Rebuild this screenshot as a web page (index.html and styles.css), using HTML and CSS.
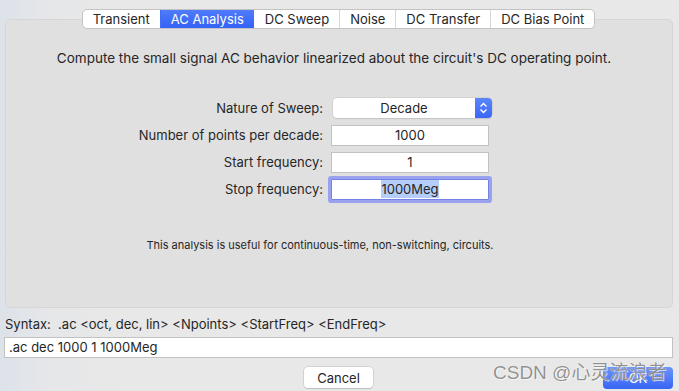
FILE: index.html
```html
<!DOCTYPE html>
<html lang="en">
<head>
    <meta charset="UTF-8">
    <meta name="viewport" content="width=device-width, initial-scale=1.0">
    <title>Edit Simulation Command</title>

    <link rel="stylesheet" href="styles.css">
</head>
<body>
    <div class="window">
        <div class="tabs">
            <div class="tab">Transient</div>
            <div class="tab active">AC Analysis</div>
            <div class="tab">DC Sweep</div>
            <div class="tab">Noise</div>
            <div class="tab">DC Transfer</div>
            <div class="tab">DC Bias Point</div>
        </div>

        <div class="panel">
            <div class="desc">Compute the small signal AC behavior linearized about the circuit's DC operating point.</div>

            <div class="form">
                <label class="label">Nature of Sweep:</label>
                <div class="popup">
                    <span class="popup-value">Decade</span>
                    <span class="stepper">
                        <svg width="9" height="12" viewBox="0 0 9 12">
                            <path d="M1.5 4.5 L4.5 1.5 L7.5 4.5 M1.5 7.5 L4.5 10.5 L7.5 7.5" fill="none" stroke="#fff" stroke-width="1.4"/>
                        </svg>
                    </span>
                </div>

                <label class="label">Number of points per decade:</label>
                <div class="field">1000</div>

                <label class="label">Start frequency:</label>
                <div class="field">1</div>

                <label class="label">Stop frequency:</label>
                <div class="field focused"><span class="sel">1000Meg</span></div>
            </div>

            <div class="note">This analysis is useful for continuous-time, non-switching, circuits.</div>
        </div>

        <div class="syntax">Syntax:&nbsp; .ac &lt;oct, dec, lin&gt; &lt;Npoints&gt; &lt;StartFreq&gt; &lt;EndFreq&gt;</div>
        <div class="command">.ac dec 1000 1 1000Meg</div>

        <div class="buttons">
            <button class="btn cancel" type="button">Cancel</button>
            <button class="btn ok" type="button">OK</button>
        </div>

        <div class="watermark">CSDN @心灵流浪者</div>
    </div>
</body>
</html>
```

FILE: styles.css
```css
body {
    margin: 0;
    padding: 0;
    font-family: Inter, "Liberation Sans", "Noto Sans CJK SC", sans-serif;
    color: #262626;
}

.window {
    position: relative;
    width: 679px;
    height: 391px;
    box-sizing: border-box;
    padding: 9px 6px 0 4px;
    background: linear-gradient(90deg, #dde2e9 0, #e6e7e9 50px, #e8e8e8 120px, #e8e8e8 100%);
    overflow: hidden;
}

.tabs {
    position: relative;
    z-index: 1;
    display: flex;
    width: max-content;
    margin: 0 auto -10px;
    background: #fff;
    border: 1px solid #c3c3c3;
    border-radius: 5px;
    overflow: hidden;
}

.tab {
    height: 18px;
    line-height: 18px;
    padding: 0 10px;
    font-size: 13px;
    border-left: 1px solid #d6d6d6;
}

.tab:first-child {
    border-left: none;
}

.tab.active {
    background: linear-gradient(#4f7bfa, #3462f6);
    color: #fff;
    border-left-color: #3f6cf8;
}

.tab.active + .tab {
    border-left-color: transparent;
}

.panel {
    height: 289px;
    box-sizing: border-box;
    margin-left: 1px;
    padding-top: 30px;
    background: #e0e0e0;
    border: 1px solid #d6d6d6;
    border-radius: 5px;
}

.desc {
    font-size: 13.5px;
    line-height: 16px;
    text-align: center;
    padding-right: 10px;
}

.form {
    display: grid;
    grid-template-columns: 317px 158px;
    column-gap: 8px;
    row-gap: 6px;
    margin-top: 32px;
}

.label {
    font-size: 13px;
    line-height: 21px;
    text-align: right;
}

.popup {
    display: flex;
    width: 159px;
    height: 20px;
    margin-left: 2px;
    background: #fff;
    border-radius: 4px;
    box-shadow: 0 0 0 0.5px #c4c4c4, 0 1px 1px rgba(0, 0, 0, 0.12);
    overflow: hidden;
}

.popup-value {
    flex: 1;
    font-size: 13px;
    line-height: 20px;
    text-align: center;
}

.stepper {
    display: flex;
    align-items: center;
    justify-content: center;
    width: 17px;
    background: linear-gradient(#5b86fb, #3967f7);
}

.field {
    height: 21px;
    box-sizing: border-box;
    background: #fff;
    border: 1px solid #c2c2c2;
    font-size: 13px;
    line-height: 19px;
    text-align: center;
}

.field.focused {
    border-color: #7482e6;
    border-radius: 1px;
    box-shadow: 0 0 0 3px #9aa2ef;
}

.sel {
    background: #b4cdf9;
    padding: 1px 0;
}

.note {
    margin-top: 38px;
    font-size: 11px;
    line-height: 14px;
    text-align: center;
    padding-right: 38px;
}

.syntax {
    margin-top: 8px;
    padding-left: 1px;
    font-size: 13px;
    line-height: 16px;
}

.command {
    height: 21px;
    box-sizing: border-box;
    margin-top: 5px;
    padding-left: 4px;
    background: #fff;
    border: 1px solid #c2c2c2;
    font-size: 13px;
    line-height: 19px;
}

.buttons {
    display: grid;
    grid-template-columns: 1fr auto 1fr;
    align-items: start;
    margin-top: 9px;
}

.btn {
    font-family: inherit;
    font-size: 13px;
    height: 21px;
    padding: 0;
    border: none;
    border-radius: 4px;
    cursor: pointer;
}

.cancel {
    grid-column: 2;
    width: 69px;
    background: #fff;
    color: #262626;
    box-shadow: 0 0 0 0.5px #bdbdbd, 0 1px 1px rgba(0, 0, 0, 0.15);
}

.ok {
    grid-column: 3;
    justify-self: end;
    width: 70px;
    height: 22px;
    background: linear-gradient(#6b95fa, #3765f5);
    color: #fff;
}

.watermark {
    position: absolute;
    left: 493px;
    top: 361px;
    font-family: "Liberation Sans", "Noto Sans CJK SC", sans-serif;
    font-size: 19px;
    line-height: 24px;
    color: rgba(110, 110, 110, 0.75);
    text-shadow: 0 0 1px #fff, 1px 1px 0 rgba(255, 255, 255, 0.6);
    white-space: nowrap;
}
```
